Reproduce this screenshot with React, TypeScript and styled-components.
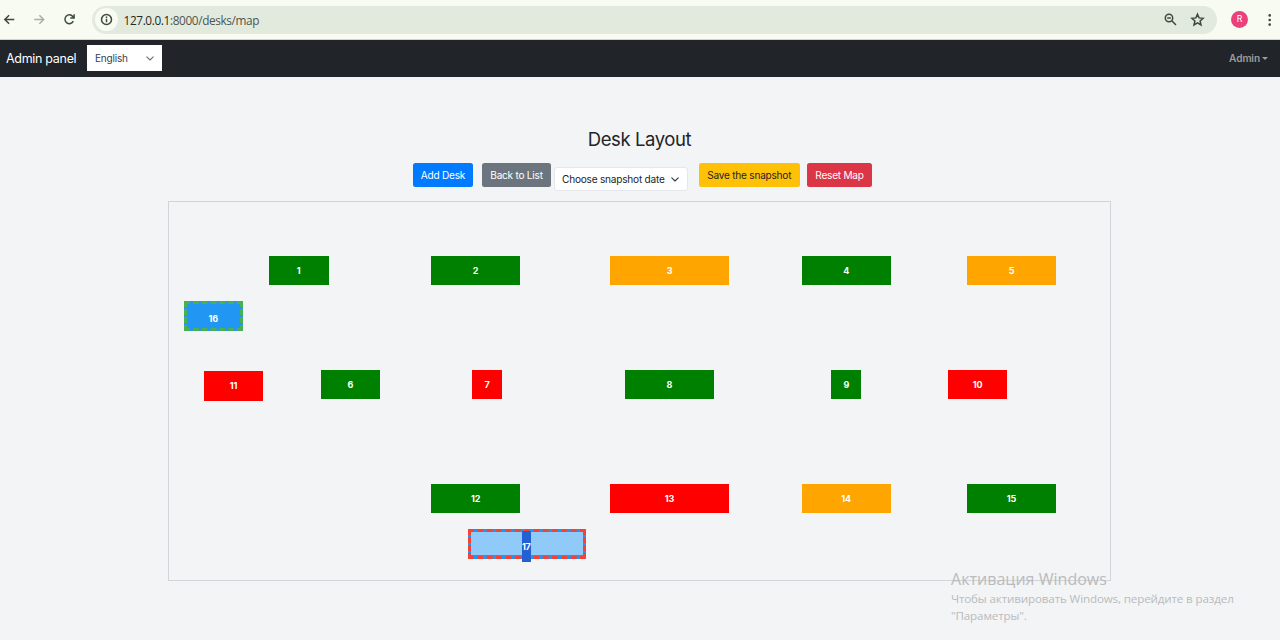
import React from "react";
import styled, { createGlobalStyle } from "styled-components";

const GlobalStyle = createGlobalStyle`
  * { box-sizing: border-box; }
  body { margin: 0; background: #f3f4f6; overflow: hidden; }
`;

const Page = styled.div`
  position: relative;
  height: 640px;
  background: #f3f4f6;
  font-family: Inter, "Liberation Sans", sans-serif;
  color: #212529;
  overflow: hidden;
`;

const BrowserBar = styled.header`
  height: 40px;
  display: flex;
  align-items: center;
  background: #f8fbf1;
  border-bottom: 1px solid #cfd5cc;
  padding: 0 5px 0 3px;
`;

const NavIcon = styled.svg<{ $muted?: boolean }>`
  width: 13px;
  height: 13px;
  flex: none;
  fill: none;
  stroke: ${(p) => (p.$muted ? "#a9b0a8" : "#3d4a40")};
  stroke-width: 1.5;
  overflow: visible;
`;

const BrowserNav = styled.div`
  width: 89px;
  display: flex;
  gap: 17.2px;
`;

const AddressBar = styled.div`
  width: 1125px;
  height: 28px;
  border-radius: 14px;
  background: #e2eade;
  display: flex;
  align-items: center;
  padding: 0 13px 0 3px;
`;

const InfoBadge = styled.div`
  width: 23px;
  height: 23px;
  border-radius: 50%;
  background: #f8fbf1;
  display: grid;
  place-items: center;
`;

const Url = styled.span`
  flex: 1;
  margin-left: 5.5px;
  padding-top: 1px;
  font: 11.8px/20px "Open Sans", "Noto Sans", sans-serif;
  letter-spacing: -0.37px;
  color: #4d574e;
  b { font-weight: 400; color: #222b24; }
`;

const AddressActions = styled.div`
  display: flex;
  gap: 14px;
`;

const Avatar = styled.div`
  width: 17px;
  height: 17px;
  margin: 0 20px 0 14px;
  border-radius: 50%;
  background: #ec407a;
  color: #fff;
  font: 9px/17px Roboto, sans-serif;
  text-align: center;
`;

const Dots = styled.svg`
  width: 4px;
  height: 14px;
  fill: #3d4a40;
`;

const AdminBar = styled.nav`
  height: 37px;
  display: flex;
  align-items: center;
  background: #212529;
  padding: 0 12px 1px 6px;
`;

const Brand = styled.span`
  width: 81px;
  font-size: 12.5px;
  letter-spacing: -0.3px;
  white-space: nowrap;
  color: #fff;
`;

const LanguageSelect = styled.button`
  width: 75px;
  height: 26px;
  display: flex;
  align-items: center;
  justify-content: space-between;
  border: 0;
  padding: 0 8px;
  background: #fff;
  color: #374151;
  font: 10px Inter, sans-serif;
  letter-spacing: -0.2px;
`;

const Chevron = styled.svg<{ $color: string }>`
  width: 8px;
  height: 5px;
  flex: none;
  fill: none;
  stroke: ${(p) => p.$color};
  stroke-width: 1.1;
  stroke-linecap: round;
  stroke-linejoin: round;
`;

const UserMenu = styled.span`
  margin-left: auto;
  display: flex;
  align-items: center;
  gap: 2px;
  color: #9b9d9f;
  font-size: 10.1px;
  font-weight: 600;
  letter-spacing: -0.1px;
`;

const Caret = styled.i`
  border: 3px solid transparent;
  border-top-color: currentColor;
  border-bottom: 0;
`;

const Title = styled.h1`
  margin: 49px 0 0;
  height: 26px;
  text-align: center;
  font-size: 18.5px;
  line-height: 26px;
  font-weight: 400;
  letter-spacing: -0.42px;
  padding-right: 1px;
`;

const Toolbar = styled.div`
  display: flex;
  margin: 11px 0 0 413px;
  height: 28px;
`;

const ActionButton = styled.button<{ $bg: string; $w: number; $gap: number; $dark?: boolean }>`
  width: ${(p) => p.$w}px;
  height: 24px;
  margin-right: ${(p) => p.$gap}px;
  padding: 0;
  border: 0;
  border-radius: 2.5px;
  background: ${(p) => p.$bg};
  color: ${(p) => (p.$dark ? "#212529" : "#fff")};
  font: 10.1px/24px Inter, sans-serif;
  letter-spacing: -0.24px;
  white-space: nowrap;
`;

const SnapshotSelect = styled.div`
  width: 133.5px;
  height: 24px;
  margin: 4px 11.5px 0 0;
  padding: 0 8px 0 7px;
  display: flex;
  align-items: center;
  justify-content: space-between;
  background: #fff;
  border: 1px solid #e4e8ec;
  border-radius: 3px;
  font-size: 10.1px;
  letter-spacing: -0.22px;
  white-space: nowrap;
`;

const DeskMap = styled.main`
  position: relative;
  width: 943px;
  height: 380px;
  margin: 10px 0 0 168px;
  border: 1px solid #d2d4d7;
`;

const DeskBox = styled.div<{ $x: number; $y: number; $w: number; $color: string }>`
  position: absolute;
  left: ${(p) => p.$x - 169}px;
  top: ${(p) => p.$y - 202}px;
  width: ${(p) => p.$w}px;
  height: 29.4px;
  display: flex;
  align-items: center;
  justify-content: center;
  background: ${(p) => p.$color};
  color: #fff;
  font-size: 9px;
  line-height: 29px;
  font-weight: 700;
  letter-spacing: -0.1px;
`;

const DraggedDesk = styled(DeskBox)<{ $border: string }>`
  border: 3px dashed ${(p) => p.$border};
  padding-top: 5px;
`;

const DropFill = styled.div`
  width: 100%;
  height: 23px;
  margin-top: -5px;
  background: #90caf9;
`;

const SelectedNumber = styled.span`
  position: absolute;
  left: 51px;
  top: -1px;
  width: 9px;
  height: 31px;
  padding-top: 1px;
  background: #2360d2;
  text-align: center;
  line-height: 30px;
  letter-spacing: -0.3px;
`;

const Watermark = styled.aside`
  position: absolute;
  left: 951px;
  top: 569px;
  color: #b9bbbd;
  font: 11.6px/17px "Open Sans", "Noto Sans", sans-serif;
  letter-spacing: -0.13px;
  white-space: nowrap;
`;

const WatermarkTitle = styled.div`
  font-size: 16px;
  line-height: 20px;
  letter-spacing: 0.03px;
  margin-bottom: 1px;
`;

const GREEN = "#008000";
const ORANGE = "#ffa500";
const RED = "#ff0000";

const desks = [
  { id: 1, x: 269, y: 256, w: 59.5, color: GREEN },
  { id: 2, x: 431, y: 256, w: 89.3, color: GREEN },
  { id: 3, x: 610, y: 256, w: 119, color: ORANGE },
  { id: 4, x: 801.5, y: 256, w: 89.3, color: GREEN },
  { id: 5, x: 967, y: 256, w: 89, color: ORANGE },
  { id: 11, x: 203.7, y: 371.2, w: 59.5, color: RED },
  { id: 6, x: 320.5, y: 369.7, w: 59.5, color: GREEN },
  { id: 7, x: 472, y: 369.7, w: 30, color: RED },
  { id: 8, x: 624.7, y: 369.7, w: 89.6, color: GREEN },
  { id: 9, x: 831.3, y: 369.7, w: 30, color: GREEN },
  { id: 10, x: 947.7, y: 369.7, w: 59.7, color: RED },
  { id: 12, x: 431, y: 483.7, w: 89.3, color: GREEN },
  { id: 13, x: 610, y: 483.7, w: 119, color: RED },
  { id: 14, x: 801.5, y: 483.7, w: 89.3, color: ORANGE },
  { id: 15, x: 967, y: 483.7, w: 89, color: GREEN },
];

const ChevronDown = ({ color }: { color: string }) => (
  <Chevron viewBox="0 0 8 5" $color={color}><path d="M.8.8 4 4 7.2.8" /></Chevron>
);

export default function App() {
  return (
    <Page>
      <GlobalStyle />
      <BrowserBar>
        <BrowserNav>
          <NavIcon viewBox="0 0 13 13"><path d="M11.3 6.5H2M6.1 2.2 1.8 6.5l4.3 4.3" /></NavIcon>
          <NavIcon viewBox="0 0 13 13" $muted><path d="M1.2 6.5h9.3M6.4 2.2l4.3 4.3-4.3 4.3" /></NavIcon>
          <NavIcon viewBox="0 0 13 13"><path d="M10.3 8.2A4.4 4.4 0 1 1 9.8 3.5L11 4.8M11.1 1.3v3.8H7.3" /></NavIcon>
        </BrowserNav>
        <AddressBar>
          <InfoBadge>
            <NavIcon viewBox="0 0 13 13"><circle cx="6.5" cy="6.5" r="5" /><path d="M6.5 5.8v3.4M6.5 3.5v1.4" /></NavIcon>
          </InfoBadge>
          <Url><b>127.0.0.1</b>:8000/desks/map</Url>
          <AddressActions>
            <NavIcon viewBox="0 0 13 13"><circle cx="5" cy="5" r="3.7" /><path d="m7.8 7.8 4.2 4.2M3.2 5h3.6" /></NavIcon>
            <NavIcon viewBox="0 0 13 13"><path d="m6.5 1.2 1.6 3.7 4 .4-3 2.7.9 4-3.5-2.1L3 12l.9-4-3-2.7 4-.4Z" /></NavIcon>
          </AddressActions>
        </AddressBar>
        <Avatar>R</Avatar>
        <Dots viewBox="0 0 4 14"><circle cx="1.7" cy="2.4" r="1.3" /><circle cx="1.7" cy="7" r="1.3" /><circle cx="1.7" cy="11.6" r="1.3" /></Dots>
      </BrowserBar>
      <AdminBar>
        <Brand>Admin panel</Brand>
        <LanguageSelect>English<ChevronDown color="#6b7280" /></LanguageSelect>
        <UserMenu>Admin<Caret /></UserMenu>
      </AdminBar>
      <Title>Desk Layout</Title>
      <Toolbar>
        <ActionButton $bg="#007bff" $w={60} $gap={9}>Add Desk</ActionButton>
        <ActionButton $bg="#6c757d" $w={69} $gap={3}>Back to List</ActionButton>
        <SnapshotSelect>Choose snapshot date<ChevronDown color="#343a40" /></SnapshotSelect>
        <ActionButton $bg="#ffc107" $w={100.5} $gap={7.5} $dark>Save the snapshot</ActionButton>
        <ActionButton $bg="#dc3545" $w={65} $gap={0}>Reset Map</ActionButton>
      </Toolbar>
      <DeskMap>
        {desks.map((d) => (
          <DeskBox key={d.id} $x={d.x} $y={d.y} $w={d.w} $color={d.color}>{d.id}</DeskBox>
        ))}
        <DraggedDesk $x={183.7} $y={301.3} $w={59.3} $color="#2196f3" $border="#4caf50">16</DraggedDesk>
        <DraggedDesk $x={467.7} $y={529.3} $w={118.7} $color="#2196f3" $border="#f44336">
          <DropFill />
          <SelectedNumber>17</SelectedNumber>
        </DraggedDesk>
      </DeskMap>
      <Watermark>
        <WatermarkTitle>Активация Windows</WatermarkTitle>
        <div>Чтобы активировать Windows, перейдите в раздел</div>
        <div>"Параметры".</div>
      </Watermark>
    </Page>
  );
}
